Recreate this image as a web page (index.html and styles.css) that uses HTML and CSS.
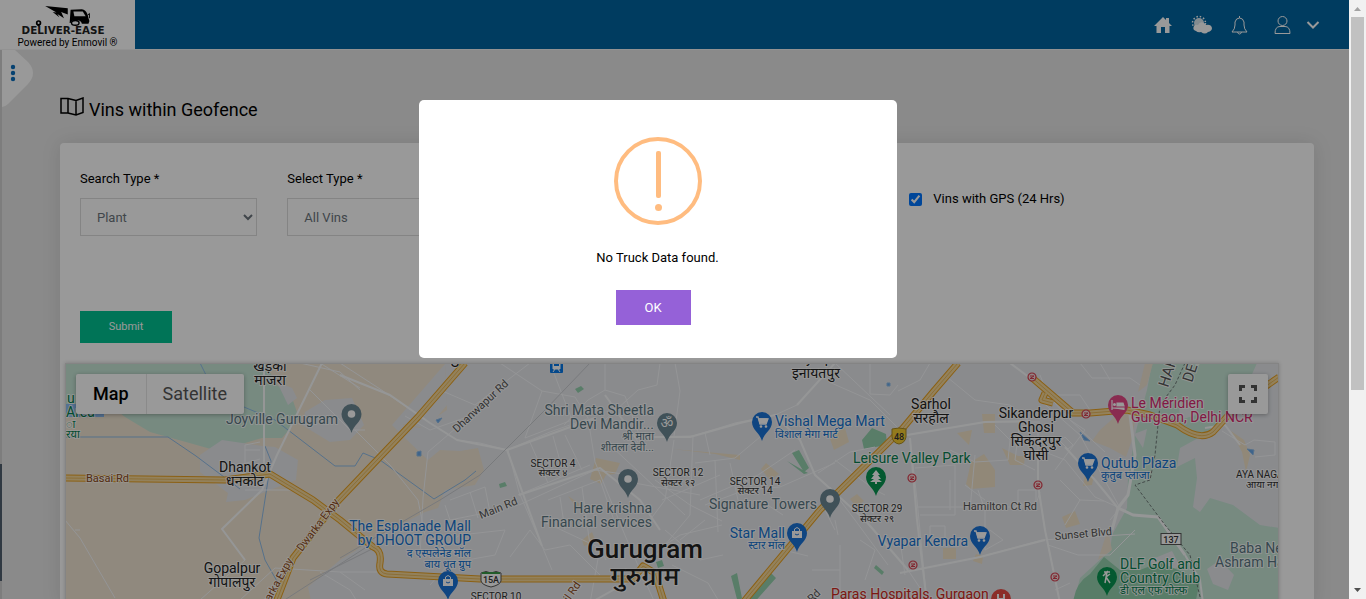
FILE: index.html
```html
<!DOCTYPE html>
<html lang="en">
<head>
<meta charset="utf-8">
<title>Vins within Geofence</title>
<link rel="stylesheet" href="styles.css">
</head>
<body>
<div class="page">
  <header class="topbar">
    <a class="brand" href="#">
      <svg class="brand-logo" viewBox="0 0 120 34" role="img" aria-label="Deliver-Ease">
        <path d="M40 1L64 3.500V10L57 7.500L60 14L53 9.500L55 13L48 7.500L52 8Z" fill="#000"/>
        <path d="M67 5L79 4.500Q83 5 85 10L86 14L87 17L86 20H79Q78 16 73 16Q68 16 67 19H66Z" fill="#000"/>
        <path d="M70 7H80L83 12L71 12Z" fill="#fff"/>
        <path d="M85 11L87 9V14" fill="none" stroke="#000"/>
        <ellipse cx="72" cy="19" rx="4" ry="2.500" fill="#fff" stroke="#000" stroke-width="1.500"/>
        <circle cx="33" cy="19" r="2" fill="none" stroke="#000" stroke-width="1.800"/><path d="M31 21H35L33 23Z"/>
        <text x="59" y="31" text-anchor="middle" class="brand-name">DELIVER-EASE</text>
      </svg>
      <span class="brand-note">Powered by Enmovil ®</span>
    </a>
    <nav class="tools" aria-label="Account">
      <a href="#" aria-label="Home"><svg width="20" height="18" viewBox="0 0 20 18"><path d="M10 1L13 4V2H16V7L19 10H16.500V17H12V11H8V17H3.500V10H1Z" fill="#fff"/></svg></a>
      <a href="#" aria-label="Weather"><svg width="22" height="20" viewBox="0 0 22 20"><circle cx="8" cy="8" r="5" fill="#fff" opacity=".85"/><circle cx="8" cy="8" r="6.500" fill="none" stroke="#fff" stroke-width="1.500" stroke-dasharray="1.500 1.900"/><path d="M5 16Q1 15 3 11Q4 9 7 10Q9 6 13 8Q15 9 15 10Q20 9 21 13Q21 16 17 17Q14 20 10 17Q7 18 5 16Z" fill="#fff"/></svg></a>
      <a href="#" aria-label="Notifications"><svg width="17" height="20" viewBox="0 0 17 20" fill="none" stroke="#fff"><path d="M8.500 1V3M1 17H16Q13 14 13 10V7Q12 3 8.500 3Q5 3 4 7V10Q4 14 1 17ZM6.500 17Q7 19 8.500 19T10.500 17"/></svg></a>
      <a class="user" href="#" aria-label="Profile"><svg width="17" height="20" viewBox="0 0 17 20" fill="none" stroke="#fff"><circle cx="8.500" cy="6" r="4.500"/><path d="M1 18.500Q1 11.500 6 11.500H11Q16 11.500 16 18.500Z"/></svg>
      <svg width="14" height="10" viewBox="0 0 14 10" fill="none" stroke="#fff" stroke-width="2"><path d="M1.500 2L7 7.500L12.500 2"/></svg></a>
    </nav>
  </header>

  <main class="content">
    <h1 class="title">
      <svg width="24" height="20" viewBox="0 0 24 20" fill="none" stroke="#000" stroke-width="1.500"><path d="M1 1.500L8 1.500L16 3.500L23 1V15.500L16 18L8 16L1 16ZM8 1.500V16M16 3.500V18"/></svg>
      Vins within Geofence
    </h1>
    <section class="card">
      <form class="filters">
        <div class="field"><label for="search-type">Search Type *</label><select id="search-type"><option>Plant</option></select></div>
        <div class="field"><label for="select-type">Select Type *</label><select id="select-type"><option>All Vins</option></select></div>
        <label class="gps"><input type="checkbox" checked>Vins with GPS (24 Hrs)</label>
        <button class="submit" type="button">Submit</button>
      </form>
      <div class="map">
        <svg class="map-canvas" viewBox="66 364 1212 240">
          <defs>
            <path id="pin" d="M0 19C-2 11-10 8-10 0A10 10 0 1 1 10 0C10 8 2 11 0 19Z"/>
            <g id="cart" fill="none" stroke="#fff" stroke-width="1.300"><path d="M-6-5H-4L-2 2H4L6-3H-3"/><path d="M-3-3H5L4 1H-2Z" fill="#fff"/><circle cx="-1" cy="4.500" r=".700"/><circle cx="4" cy="4.500" r=".700"/></g>
            <g id="bag"><path d="M-5-2H5V5H-5Z" fill="#fff"/><path d="M-2.500-2V-4Q0-7 2.500-4V-2" fill="none" stroke="#fff"/><path d="M-2 1Q0 3 2 1" fill="none" stroke="#1a73d8"/></g>
            <g id="metro"><circle r="4" fill="#f3dede" stroke="#d84050" stroke-width="1.200"/><path d="M-2-1H2L-2 1.500H2" fill="none" stroke="#d84050"/></g>
          </defs>
          <path class="urban" d="M65 363H1279V605H65Z"/>
          <path class="field-land" d="M65 363H445L447 410L420 428L403 425L405 438L428 460L440 450L460 451L478 448L484 470L475 485L445 490L438 508L425 512L390 530L340 560L308 587L312 605H65Z"/>
          <path class="park" d="M65 363H265L277 385L292 398L299 418L282 438L262 438L218 451L186 442L150 432L125 417L110 405H65Z"/>
          <path class="urban" d="M277 382L292 388L297 398L288 405ZM305 412L325 400L352 398L364 425L350 440L330 442L302 425ZM222 440L262 446L275 447L298 460L296 480L270 490L245 500L226 502L228 493L200 472L200 455ZM445 364L447 405L437 417L425 428L403 424L405 438L392 425Z"/>
          <path class="park" d="M1152 363H1257L1245 390L1228 417L1200 437L1180 448L1177 467L1195 458L1197 478L1193 507L1200 512L1210 498L1233 505L1260 525L1279 528V605H1073L1080 578L1103 557L1110 552L1112 535L1127 508L1128 478L1135 435L1140 415L1147 390Z"/>
          <path class="urban" d="M1207 569L1220 560L1234 575L1228 590L1213 584ZM1150 560L1172 551L1180 566L1160 575ZM1134 434L1147 429L1143 448ZM1179 403L1198 399L1196 415L1180 420Z"/>
          <path class="field-land" d="M1100 430L1125 408L1136 413L1132 440L1126 457L1110 448L1092 441ZM1145 363H1153L1147 385L1138 392ZM1108 530L1112 550L1098 560L1106 535Z"/>
          <path class="golf" d="M1104 557L1120 570H1140L1160 562L1200 580L1195 605H1073Q1074 584 1090 574ZM862 440L872 428L886 434L887 445L864 449ZM792 453L799 450L809 468L804 472ZM770 572L776 578L752 605H738ZM731 576L737 573L742 598L738 603ZM787 461L808 473L804 474ZM876 565L884 572L882 575L874 568ZM575 389L581 386L584 389L578 393ZM499 484L505 482L507 486L500 488ZM656 562L662 560L664 566L658 568Z"/>
          <path class="block" d="M596 458L620 463L615 474L606 475L601 484L590 479ZM766 463L779 474L770 480L761 469ZM829 436L845 428L849 442L834 450ZM971 462L984 454L995 470V487L971 489L966 484ZM957 433L972 430L969 445ZM982 414H995V433H984ZM1002 448L1018 456H1025L1024 465H1010ZM1062 517L1075 511L1080 524L1066 528ZM672 449L740 455V460L715 454ZM568 496L580 504L578 510ZM582 540L592 532L596 542L584 546ZM943 548H956V559H943ZM850 499L857 494L864 501L856 507ZM976 554L983 556L982 564L973 561ZM1231 431L1244 440L1250 455L1246 472L1242 452ZM1085 474L1094 475L1092 485L1083 486Z"/>
          <g class="water"><path d="M200 363L206 375M244 407L275 420L335 466H355L363 453L380 460L434 499L465 480L476 471M65 437H168L196 456L240 489M265 446L271 461L259 538L265 560L282 590"/><path d="M436 420L442 418L438 423ZM417 452L421 451L421 456L417 456ZM1080 432L1090 441L1084 440ZM887 383H890V386H887ZM1247 449L1254 450L1253 455Z" fill="#68a7e8"/></g>
          <g class="minor">
            <path d="M340 363L380 389L430 423L457 440L480 443L507 450L550 432L587 419M440 390L475 405L530 363M500 363L542 391L575 397L588 418L595 462L624 533L640 570L655 603M428 452L470 416L430 430L405 416M428 452L423 498L420 555M355 430L390 465L418 500L425 535M508 450L519 492L542 546L552 570M519 505L595 470L630 475M518 495L590 465M529 440L548 483M553 436L562 468M565 435L582 470M550 363L572 420L525 438L542 391M605 363V390L588 400L564 425M605 390L625 396L640 437M450 500L485 487L490 512L450 520L445 505M470 492L478 518M430 555L460 535L505 530L495 555L450 563L430 585M548 500L600 480L615 523M540 520L600 548L606 560M560 497L565 530M582 487L590 545M510 557L530 530L545 550L570 545L600 575M600 548L590 603"/>
            <path d="M660 363L657 385L638 390L605 420M675 363L680 391L674 436M605 395L638 442M640 437L693 436L735 423L775 415L797 405L835 363M693 436L690 515L640 575M695 463L735 458L760 437M674 440L665 500L650 520M705 433L710 455M610 445L685 515M655 480L690 505L722 521M715 460L718 532M618 480L700 495M730 463L738 500M700 500L758 475L795 450M662 500L720 475M650 555L680 535L722 525M672 565L708 583L720 603M705 505L745 490L780 487L835 463M760 500L783 515M665 530L700 560L723 555M680 540L705 520M735 530L763 545L808 556"/>
            <path d="M775 415L800 440L815 475L860 515L908 570L930 603M829 382L870 400L905 435M835 363L890 415M870 363V394L890 395L898 385M930 363L920 380L898 391M907 435L985 422L1040 422M910 438L917 500L927 603M818 473L850 452L875 447M835 460L875 490L885 495M830 487L855 520L888 565M917 507H1035L1040 492M950 480V510M975 455L970 510M915 468L955 465L955 515H920M930 526H945V545H930ZM965 485L985 500M950 450L975 462L1008 460L1010 440L995 425M900 573L980 557L1042 540L1135 534M978 490L985 510L985 550L1003 540L990 530M1038 430L1038 485L1045 530L1060 603M1020 420L1015 460L1035 470M1018 490H1036V505H1018ZM947 377L975 400L1010 405L1030 422M900 540L905 575M860 540L875 550L865 580M840 545V603M812 570H840M835 520L838 535M820 500L835 530M1040 375L1048 395L1070 420L1105 452M1040 400L1080 435L1120 508L1110 520M1040 450L1065 460L1095 497L1120 508M1050 395H1080L1090 410M1060 480L1080 500L1104 501M1080 500L1065 525M1055 470L1085 430L1070 420M1080 363L1092 378H1130L1140 385M1100 363L1110 380M1048 545L1078 555H1110L1135 530M1055 590L1070 583M1222 431L1245 445L1254 440L1275 442V455L1255 457M1065 437L1073 445L1068 449L1060 441Z"/>
            <path d="M65 520L80 538L115 598M80 530L75 530M200 600L245 560L222 529L262 490M245 490L300 490L330 512M275 568L340 572L365 590M275 568L240 600M320 572L350 590L358 603M320 363L360 388M300 363L340 372L360 390M310 390L350 430L365 430M264 430L264 470M225 470L245 474V445L260 442M340 572H380M245 450H260M240 465L260 459"/>
          </g>
          <g class="road"><path d="M264 363V472M322 363L277 455L262 490L222 529L245 560M340 375L390 395L430 423L457 440L507 450L595 418M519 495L600 468L640 500L660 530M507 450L542 546M605 395L635 437H690L740 423L775 415L800 440L815 475L865 520L908 570M910 438L917 520L927 603M907 435L985 422L1030 421M1038 450V485L1045 530L1060 603M835 363L797 405M900 573L980 557L1045 540M640 575L590 603M1010 363L1042 387L1050 397M1065 447L1095 480L1118 508M1185 555L1200 580L1203 603M1205 428L1225 425L1240 445"/></g>
          <path class="road wide" d="M1130 415L1135 455L1128 495L1118 508L1112 530M1118 508L1133 515L1158 517L1185 555"/>
          <g class="rail"><path d="M590 363L545 410L480 475L440 500L340 558M310 580L390 540M280 603L365 548"/></g>
          <g class="highway-edge"><path id="hw" d="M65 478L145 479L225 480L270 474L313 500L340 520L373 547Q382 550 380 563Q378 573 387 574L480 579H633L643 566L655 573L665 605M275 605L293 558L337 502L418 417L465 363M741 605L820 510L903 428L933 392L958 363M1030 376L1073 413H1090L1127 410L1150 415L1177 425Q1200 442 1213 432L1235 408L1279 377M1045 393L1042 400L1053 403"/></g>
          <use href="#hw" class="highway"/>
          <use href="#hw" class="highway-line"/>
          <path class="boundary" d="M1185 363L1175 385L1160 405L1155 455L1150 480L1135 485L1165 525L1190 555L1202 605"/>
          <path d="M65 404H104V417H65Z" fill="#8dbcf2"/>

          <g class="town" text-anchor="middle">
            <text x="270" y="371">खेड़की</text><text x="270" y="385">माजरा</text>
            <text x="245" y="472">Dhankot</text><text x="245" y="486">धनकोट</text>
            <text x="232" y="573">Gopalpur</text><text x="232" y="587">गोपालपुर</text>
            <text x="816" y="363">Inayatpur</text><text x="816" y="378">इनायतपुर</text>
            <text x="931" y="409">Sarhol</text><text x="931" y="423">सरहौल</text>
            <text x="1036" y="418">Sikanderpur</text><text x="1036" y="432">Ghosi</text><text x="1036" y="446">सिकंदरपुर</text><text x="1036" y="460">घोसी</text>
            <text x="455" y="367">S</text>
          </g>
          <g class="city" text-anchor="middle"><text x="645" y="558">Gurugram</text><text x="645" y="585">गुरुग्राम</text></g>
          <g class="place">
            <text x="226" y="424">Joyville Gurugram</text>
            <g text-anchor="end"><text x="654" y="415">Shri Mata Sheetla</text><text x="654" y="429">Devi Mandir...</text><text x="654" y="440" class="sub">श्री माता</text><text x="654" y="451" class="sub">शीतला देवी...</text>
            <text x="652" y="513">Hare krishna</text><text x="652" y="527">Financial services</text><text x="817" y="509">Signature Towers</text></g>
            <text x="1230" y="553">Baba Neem</text><text x="1215" y="567">Ashram Hanuman</text>
          </g>
          <g class="shop">
            <g text-anchor="end"><text x="471" y="531">The Esplanade Mall</text><text x="471" y="545">by DHOOT GROUP</text><text x="471" y="557" class="sub">द एस्पलेनेड मॉल</text><text x="471" y="568" class="sub">बाय धूत ग्रुप</text><text x="785" y="538">Star Mall</text><text x="785" y="549" class="sub">स्टार मॉल</text><text x="968" y="546">Vyapar Kendra</text></g>
            <text x="775" y="426">Vishal Mega Mart</text><text x="775" y="438" class="sub">विशाल मेगा मार्ट</text>
            <text x="1101" y="468">Qutub Plaza</text><text x="1101" y="479" class="sub">कुतुब प्लाजा</text>
          </g>
          <g class="green"><text x="853" y="463">Leisure Valley Park</text><text x="1120" y="569">DLF Golf and</text><text x="1120" y="583">Country Club</text><text x="1120" y="594" class="sub">डी एल एफ गोल्फ</text><text x="67" y="403">u</text><text x="66" y="417">Area</text><text x="66" y="428" class="sub">ा</text><text x="66" y="438" class="sub">रया</text></g>
          <g class="hotel"><text x="1131" y="408">Le Méridien</text><text x="1131" y="422">Gurgaon, Delhi NCR</text></g>
          <text class="hospital" x="831" y="599">Paras Hospitals, Gurgaon</text>
          <g class="sector" text-anchor="middle">
            <text x="553" y="467">SECTOR 4</text><text x="553" y="476">सेक्टर ४</text>
            <text x="678" y="476">SECTOR 12</text><text x="678" y="486">सेक्टर १२</text>
            <text x="755" y="485">SECTOR 14</text><text x="755" y="494">सेक्टर 14</text>
            <text x="877" y="512">SECTOR 29</text><text x="877" y="522">सेक्टर २९</text>
            <text x="496" y="600">SECTOR 10</text>
          </g>
          <g class="sector"><text x="1236" y="478">AYA NAGAR</text><text x="1246" y="488">आया नगर</text></g>
          <g class="street">
            <text transform="translate(457 433) rotate(-43)">Dhanwapur Rd</text>
            <text transform="translate(481 519) rotate(-22)">Main Rd</text>
            <text x="963" y="510">Hamilton Ct Rd</text>
            <text transform="translate(1055 540) rotate(-5)">Sunset Blvd</text>
            <text transform="translate(812 603) rotate(-45)">Rd</text>
          </g>
          <g class="street route">
            <text x="86" y="482">Basai Rd</text>
            <text transform="translate(302 552) rotate(-53)">Dwarka Expy</text>
            <text transform="translate(263 615) rotate(-61)">Dwarka Expy</text>
            <text transform="translate(562 612) rotate(-55)">Jail Rd</text>
          </g>
          <g class="region"><text transform="translate(1168 388) rotate(-72)">HARYANA</text><text transform="translate(1192 383) rotate(-72)">DELHI</text></g>

          <g fill="#6b8793"><use href="#pin" x="351.500" y="414"/><use href="#pin" x="628" y="479"/><use href="#pin" x="830" y="499"/><use href="#pin" x="667" y="423"/></g>
          <g fill="#fff"><circle cx="351.500" cy="414" r="3.800"/><circle cx="628" cy="479" r="3.800"/><circle cx="830" cy="499" r="3.800"/></g>
          <text class="om" x="667" y="428" text-anchor="middle">ॐ</text>
          <g fill="#1a73d8"><use href="#pin" x="448" y="581"/><use href="#pin" x="762" y="422"/><use href="#pin" x="797" y="533"/><use href="#pin" x="980" y="536"/><use href="#pin" x="1088" y="463"/></g>
          <use href="#bag" x="448" y="581"/><use href="#cart" x="762" y="422"/><use href="#bag" x="797" y="533"/><use href="#cart" x="980" y="536"/><use href="#cart" x="1088" y="463"/>
          <use href="#pin" x="876" y="477" fill="#079550"/><path d="M876 470L880 475H878L881 479H878L882 482H877V484H875V482H870L874 479H871L874 475H872Z" fill="#fff"/>
          <use href="#pin" x="1107" y="577" fill="#079550"/><path d="M1104 572H1110M1107 572L1105 583M1106 577L1110 583M1108 571L1103 576M1110 574L1106 577" fill="none" stroke="#fff" stroke-width="1.500"/>
          <use href="#pin" x="1118" y="405" fill="#e44986"/><path d="M1112 400V410M1112 408H1124V410M1117 403H1123L1124 406H1117Z" fill="#fff" stroke="#fff" stroke-width="1.200"/><circle cx="1114.500" cy="404.500" r="1.500" fill="#fff"/>
          <circle cx="1001" cy="599" r="10" fill="#e84b44"/><path d="M998 594V603M1004 594V603M998 599H1004" stroke="#fff" stroke-width="2"/>
          <rect x="550" y="361" width="13" height="12" rx="1" fill="#0878e8"/><path d="M553 362H560V369H553ZM553 372L555 369M560 372L558 369" fill="#fff" stroke="#fff"/><path d="M554 364H559V366H554Z" fill="#0878e8"/>
          <g><use href="#metro" x="1032" y="377"/><use href="#metro" x="1086" y="414"/><use href="#metro" x="912" y="478"/><use href="#metro" x="1038" y="485"/><use href="#metro" x="913" y="565"/><use href="#metro" x="1055" y="577"/></g>
          <path d="M892 429Q899 427 906 429V437Q905 443 899 444Q893 443 892 437Z" fill="#f6cb31" stroke="#a98b26"/><text class="shield" x="899" y="440">48</text>
          <path d="M481 573Q486 570 491 573Q496 570 501 573V581Q500 585 491 587Q482 585 481 581Z" fill="#fff" stroke="#555"/><path d="M482 572H500V574H482Z" fill="#3a9a47"/><text class="shield" x="491" y="583">15A</text>
          <rect x="1161" y="533.500" width="20" height="11" fill="#fff" stroke="#555"/><text class="shield" x="1171" y="543">137</text>
        </svg>
        <div class="map-type"><button type="button" class="active">Map</button><button type="button">Satellite</button></div>
        <button class="fullscreen" type="button" aria-label="Toggle fullscreen view"><svg width="18" height="18" viewBox="0 0 18 18" fill="none" stroke="#555" stroke-width="3"><path d="M1.500 6V1.500H6M12 1.500H16.500V6M16.500 12V16.500H12M6 16.500H1.500V12"/></svg></button>
      </div>
    </section>
  </main>

  <div class="edge"><span></span></div>
  <button class="drawer" type="button" aria-label="Open menu"><svg width="31" height="58" viewBox="0 0 31 58"><path d="M0 0H13L26 12Q36 23 26 34L6 54Q3 57 0 57Z" fill="#fff"/><g fill="#0a6ebd"><circle cx="11" cy="17" r="2.200"/><circle cx="11" cy="23" r="2.200"/><circle cx="11" cy="29" r="2.200"/></g></svg></button>

  <div class="overlay"></div>
  <div class="alert" role="alertdialog" aria-labelledby="alert-text">
    <svg class="alert-icon" width="88" height="88" viewBox="0 0 88 88"><circle cx="44" cy="44" r="42" fill="none" stroke="#ffbc80" stroke-width="4"/><rect x="42" y="14" width="5" height="47" rx="2" fill="#ffbc80"/><circle cx="44.500" cy="70.500" r="3.500" fill="#ffbc80"/></svg>
    <p id="alert-text">No Truck Data found.</p>
    <button type="button">OK</button>
  </div>
</div>
<div class="scrollbar" aria-hidden="true">
  <svg width="17" height="17" viewBox="0 0 17 17"><path d="M5 11L8.500 7L12 11Z" fill="#a3a3a3"/></svg>
  <div class="scroll-track"><div class="scroll-thumb"></div></div>
  <svg width="17" height="17" viewBox="0 0 17 17"><path d="M5 6L8.500 10L12 6Z" fill="#505050"/></svg>
</div>
</body>
</html>
```

FILE: styles.css
```css
* { box-sizing: border-box; }
body { margin: 0; height: 100vh; display: flex; overflow: hidden; font: 13px/20px Roboto, "Noto Sans", sans-serif; color: #000; }
button, select { font: inherit; }
a { color: inherit; text-decoration: none; }
.page { position: relative; flex: 1; min-width: 0; overflow: hidden; background: #e6e6e6; }

.topbar { display: flex; height: 50px; background: #0064a0; justify-content: space-between; border-bottom: 1px solid #f4f4f4; }
.brand { display: flex; flex-direction: column; align-items: center; width: 135px; padding-top: 5px; background: #fff; }
.brand-logo { width: 120px; height: 34px; margin-right: 8px; }
.brand-name { font: bold 11px "DejaVu Sans", sans-serif; fill: #222; }
.brand-note { font-size: 10px; line-height: 12px; }
.tools { display: flex; align-items: center; gap: 18px; padding-right: 29px; }
.tools a { display: flex; align-items: center; }
.tools .user { gap: 15px; margin-left: 8px; }

.content { padding: 46px 35px 0 60px; }
.title { display: flex; align-items: center; gap: 5px; margin: 0; padding-top: 4px; height: 24px; font-size: 18px; font-weight: 400; line-height: 24px; }
.title svg { margin-bottom: 6px; }
.card { margin-top: 23px; padding: 26px 20px 0; background: #fff; border-radius: 4px; box-shadow: 0 0 20px rgba(0, 0, 0, .1); }
.filters { display: grid; grid-template-columns: repeat(6, 1fr); column-gap: 30px; }
.field { display: flex; flex-direction: column; gap: 9px; }
.field select { height: 38px; padding: 0 12px; color: #6c757d; background: #fff; border: 1px solid #ddd; border-radius: 0; }
.gps { grid-column: 5; display: flex; align-items: center; gap: 11px; height: 60px; white-space: nowrap; }
.gps input { width: 13px; height: 13px; margin: 0; accent-color: #0075ff; }
.submit { grid-column: 1; width: 92px; height: 32px; margin: 75px 0 20px; border: 0; background: #00c292; color: #fff; font-size: 11px; }

.map { position: relative; margin: 0 15px 0 -15px; border: 1px solid #ddd; box-shadow: 0 0 4px rgba(0, 0, 0, .2); overflow: hidden; }
.map-canvas { display: block; width: 100%; height: auto; }
.map-type { position: absolute; left: 10px; top: 10px; display: flex; height: 40px; background: #fff; border-radius: 2px; box-shadow: 0 1px 4px rgba(0, 0, 0, .3); }
.map-type button { padding: 0 17px; border: 0; background: none; color: #565656; font-size: 18px; }
.map-type .active { color: #000; font-weight: 500; box-shadow: 1px 0 #e6e6e6; }
.fullscreen { position: absolute; right: 10px; top: 10px; display: grid; place-items: center; width: 40px; height: 40px; padding: 0; border: 0; border-radius: 2px; background: #fff; box-shadow: 0 1px 4px rgba(0, 0, 0, .3); }

.urban { fill: #e6e8ec; }
.field-land { fill: #f0e5d2; }
.park { fill: #c6e6d6; }
.golf { fill: #94d1ad; }
.block { fill: #f2e3c8; }
.water { fill: none; stroke: #8fbce8; stroke-width: 1; }
.minor { fill: none; stroke: #f7f8fa; stroke-width: 1; }
.road { fill: none; stroke: #f9fafb; stroke-width: 2; stroke-linejoin: round; }
.wide { stroke-width: 3; }
.rail { fill: none; stroke: #c9cbcf; stroke-width: 1; }
.highway-edge { fill: none; stroke: #e8a020; stroke-width: 7; stroke-linejoin: round; }
.highway { fill: none; stroke: #f6d898; stroke-width: 5; stroke-linejoin: round; }
.highway-line { fill: none; stroke: #e8b85c; stroke-width: 1; stroke-linejoin: round; }
.boundary { fill: none; stroke: #707a78; stroke-width: 1; stroke-dasharray: 3 2; }
.map-canvas text { font-family: Roboto, "Noto Sans", "Noto Sans Devanagari", sans-serif; paint-order: stroke; stroke: rgba(255, 255, 255, .8); stroke-width: 2px; stroke-linejoin: round; }
.town { font-size: 14px; fill: #222; }
.city { font-size: 26px; font-weight: 500; fill: #222; }
.place { font-size: 14px; fill: #5b7783; }
.shop { font-size: 14px; fill: #1573d0; }
.green { font-size: 14px; fill: #078050; }
.hotel { font-size: 14px; fill: #d82b70; }
.hospital { font-size: 14px; fill: #d02820; }
.map-canvas .sub { font-size: 11px; }
.sector { font-size: 10px; fill: #333; }
.street { font-size: 11px; fill: #555; }
.route { fill: #8d4a20; }
.region { font-size: 15px; fill: #555; }
.map-canvas .om { font-size: 14px; fill: #fff; stroke: none; }
.map-canvas .shield { font-size: 9px; font-weight: 500; fill: #333; stroke: none; text-anchor: middle; }

.edge { position: absolute; left: 0; top: 50px; bottom: 0; width: 2px; background: #d0d0d0; }
.edge span { position: absolute; top: 414px; width: 2px; height: 117px; background: #50606e; }
.drawer { position: absolute; left: 2px; top: 50px; padding: 0; border: 0; background: none; }
.drawer svg { display: block; }

.overlay { position: absolute; inset: 0; background: rgba(0, 0, 0, .4); }
.alert { position: absolute; left: 50%; top: 100px; width: 478px; margin-left: -256px; padding: 37px 17px 33px; border-radius: 5px; background: #fff; display: flex; flex-direction: column; align-items: center; }
.alert p { margin: 23px 0 22px; }
.alert button { width: 75px; height: 35px; margin-right: 9px; border: 0; background: #9561d8; color: #fff; }

.scrollbar { display: flex; flex-direction: column; width: 17px; background: #f1f1f1; }
.scroll-track { flex: 1; padding: 0 2px; }
.scroll-thumb { height: 66%; background: #c1c1c1; }
```
